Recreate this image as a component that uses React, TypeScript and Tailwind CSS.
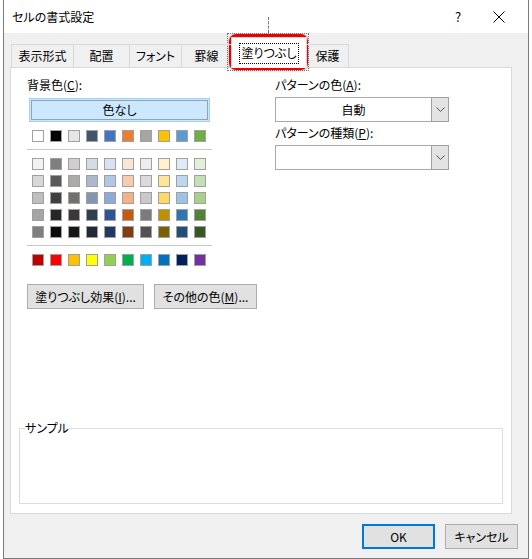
import React from "react";

const font = { fontFamily: '"Noto Sans CJK JP", "Noto Sans", sans-serif' };

const row1 = ["#FFFFFF", "#000000", "#E7E6E6", "#44546A", "#4472C4", "#ED7D31", "#A5A5A5", "#FFC000", "#5B9BD5", "#70AD47"];
const shades = [
  ["#F2F2F2", "#7F7F7F", "#D0CECE", "#D6DCE4", "#D9E2F3", "#FBE5D5", "#EDEDED", "#FFF2CC", "#DDEBF7", "#E2EFD9"],
  ["#D8D8D8", "#595959", "#AEAAAA", "#ADB9CA", "#B4C6E7", "#F7CBAC", "#DBDBDB", "#FFE598", "#BDD7EE", "#C5E0B3"],
  ["#BFBFBF", "#3F3F3F", "#757070", "#8496B0", "#8EAADB", "#F4B183", "#C9C9C9", "#FFD966", "#9CC3E5", "#A8D08D"],
  ["#A5A5A5", "#262626", "#3A3838", "#323F4F", "#2F5496", "#C55A11", "#7B7B7B", "#BF9000", "#2E75B5", "#538135"],
  ["#7F7F7F", "#0C0C0C", "#171616", "#222A35", "#1F3864", "#833C0B", "#525252", "#7F6000", "#1E4E79", "#375623"],
];
const standard = ["#C00000", "#FF0000", "#FFC000", "#FFFF00", "#92D050", "#00B050", "#00B0F0", "#0070C0", "#002060", "#7030A0"];

function SwatchRow({ colors }: { colors: string[] }) {
  return (
    <div className="flex gap-[6px]">
      {colors.map((c, i) => (
        <div
          key={i}
          className="w-[12px] h-[12px] border border-[#a0a0a0]"
          style={{ backgroundColor: c }}
        />
      ))}
    </div>
  );
}

function Chevron() {
  return (
    <svg width="9" height="5" viewBox="0 0 9 5" fill="none">
      <path d="M0.5 0.5 L4.5 4.5 L8.5 0.5" stroke="#555" strokeWidth="1" />
    </svg>
  );
}

function Select({ value }: { value: string }) {
  return (
    <div className="flex w-[174px] h-[25px] border border-[#a9a9a9] bg-white">
      <div className="flex-1 flex items-center justify-center text-[12px] leading-[16px]">{value}</div>
      <div className="w-[18px] -my-px -mr-px flex items-center justify-center bg-[#e3e3e3] border border-[#a0a0a0]">
        <Chevron />
      </div>
    </div>
  );
}

function Tab({ label, w }: { label: string; w: number }) {
  return (
    <div
      className="h-[23px] mb-px border-l border-t border-[#d9d9d9] flex items-center justify-center text-[12px] leading-[16px]"
      style={{ width: w }}
    >
      {label}
    </div>
  );
}

export default function App() {
  return (
    <div
      className="w-[532px] h-[559px] bg-white relative overflow-hidden text-black [font-feature-settings:'palt']"
      style={font}
    >
      <div className="ml-[3px] w-[526px] h-[559px] border-x border-b border-[#7a7a7a] flex flex-col">
        {/* Title bar */}
        <div className="h-[33px] bg-white flex items-center">
          <div className="ml-[8px] text-[12px] leading-[16px]">セルの書式設定</div>
          <div className="ml-auto flex items-center">
            <span className="w-[12px] text-center text-[13px] leading-[16px]">?</span>
            <svg className="ml-[29px] mr-[23px]" width="12" height="12" viewBox="0 0 12 12">
              <path d="M0.5 0.5 L11.5 11.5 M11.5 0.5 L0.5 11.5" stroke="#000" strokeWidth="1" />
            </svg>
          </div>
        </div>

        {/* Body */}
        <div className="flex-1 bg-[#f0f0f0] pt-[4px] pl-[6px]">
          {/* Tabs */}
          <div className="relative z-10 -mb-px h-[31px] flex items-end ml-[1px]">
            <Tab label="表示形式" w={62} />
            <Tab label="配置" w={56} />
            <Tab label="フォント" w={52} />
            <Tab label="罫線" w={50} />
            <div className="w-[76px] h-[31px] bg-white border-x border-t border-[#d9d9d9] flex items-center justify-center">
              <div className="border border-dotted border-black w-[60px] h-[21px] flex items-center justify-center text-[12px] leading-[16px]">
                塗りつぶし
              </div>
            </div>
            <div className="w-[42px] h-[23px] mb-px border-r border-t border-[#d9d9d9] flex items-center justify-center text-[12px] leading-[16px]">
              保護
            </div>
          </div>

          {/* Panel */}
          <div className="w-[502px] h-[447px] bg-white border border-[#d9d9d9] flex flex-col">
            <div className="flex pt-[9px] pl-[16px]">
              {/* Left column */}
              <div className="w-[248px] flex flex-col">
                <div className="text-[12px] leading-[16px]">
                  背景色(<span className="underline">C</span>):
                </div>
                <div className="mt-[5px] ml-[2px] w-[181px] h-[24px] border border-[#99d1ff] bg-[#cce8ff] p-px">
                  <div className="w-full h-full border border-[#a0a0a0] flex items-center justify-center text-[12px] leading-[16px]">
                    色なし
                  </div>
                </div>
                <div className="mt-[8px] ml-[5px]">
                  <SwatchRow colors={row1} />
                </div>
                <div className="mt-[7px] w-[185px] h-px bg-[#c8c8c8]" />
                <div className="mt-[8px] ml-[5px] flex flex-col gap-[5px]">
                  {shades.map((r, i) => (
                    <SwatchRow key={i} colors={r} />
                  ))}
                </div>
                <div className="mt-[7px] w-[185px] h-px bg-[#c8c8c8]" />
                <div className="mt-[8px] ml-[5px]">
                  <SwatchRow colors={standard} />
                </div>
                <div className="mt-[18px] flex gap-[10px]">
                  <div className="w-[117px] h-[25px] bg-[#e1e1e1] border border-[#adadad] flex items-center justify-center text-[12px] leading-[16px]">
                    塗りつぶし効果(<span className="underline">I</span>)...
                  </div>
                  <div className="w-[103px] h-[25px] bg-[#e1e1e1] border border-[#adadad] flex items-center justify-center text-[12px] leading-[16px]">
                    その他の色(<span className="underline">M</span>)...
                  </div>
                </div>
              </div>

              {/* Right column */}
              <div className="flex flex-col">
                <div className="text-[12px] leading-[16px]">
                  パターンの色(<span className="underline">A</span>):
                </div>
                <div className="mt-[4px]">
                  <Select value="自動" />
                </div>
                <div className="mt-[3px] text-[12px] leading-[16px]">
                  パターンの種類(<span className="underline">P</span>):
                </div>
                <div className="mt-[4px]">
                  <Select value="" />
                </div>
              </div>
            </div>

            {/* Sample */}
            <fieldset className="mt-auto mb-[9px] mx-[8px] h-[83px] border border-[#dcdcdc]">
              <legend className="ml-[5px] text-[12px] leading-[14px]">サンプル</legend>
            </fieldset>
          </div>

          {/* Buttons */}
          <div className="mt-[10px] flex justify-end gap-[10px] w-[508px]">
            <div className="w-[73px] h-[25px] bg-[#e1e1e1] border-2 border-[#0078d7] flex items-center justify-center text-[12px] leading-[16px]">
              OK
            </div>
            <div className="w-[73px] h-[25px] bg-[#e1e1e1] border border-[#adadad] flex items-center justify-center text-[12px] leading-[16px]">
              キャンセル
            </div>
          </div>
        </div>
      </div>

      {/* Annotation overlay */}
      <div className="absolute left-[268px] top-[17px] h-[16px] border-l border-dashed border-[#777]" />
      <div className="absolute left-[227px] top-[33px] w-[82px] h-[38px] border border-dotted border-[#777]" />
      <div className="absolute left-[229px] top-[34px] w-[79px] h-[36px] border-[4px] border-[#ee0000] rounded-[7px] shadow-[0_1px_3px_rgba(0,0,0,0.25)]" />
    </div>
  );
}
